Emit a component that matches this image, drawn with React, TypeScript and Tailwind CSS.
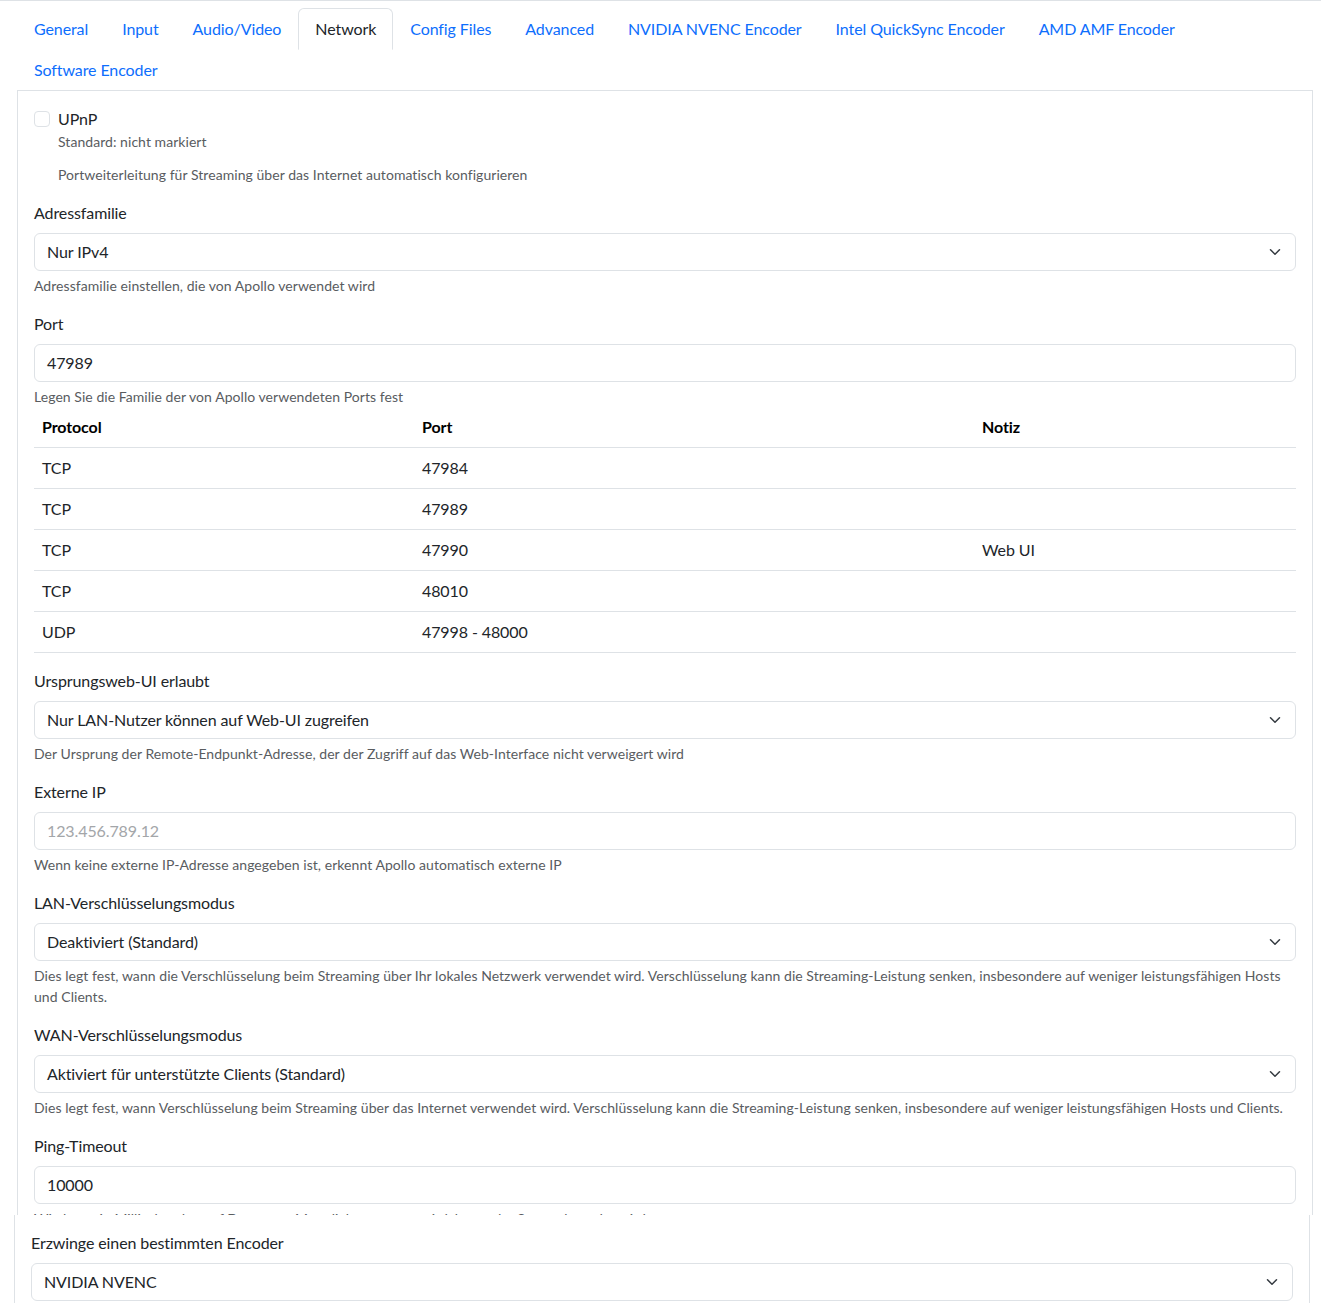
import React from "react";

const tabs = [
  "General",
  "Input",
  "Audio/Video",
  "Network",
  "Config Files",
  "Advanced",
  "NVIDIA NVENC Encoder",
  "Intel QuickSync Encoder",
  "AMD AMF Encoder",
  "Software Encoder",
];

const ports = [
  { proto: "TCP", port: "47984", note: "" },
  { proto: "TCP", port: "47989", note: "" },
  { proto: "TCP", port: "47990", note: "Web UI" },
  { proto: "TCP", port: "48010", note: "" },
  { proto: "UDP", port: "47998 - 48000", note: "" },
];

const Chevron = () => (
  <svg
    viewBox="0 0 16 16"
    className="w-4 h-3 absolute right-3 top-1/2 -translate-y-1/2"
    fill="none"
    stroke="#343a40"
    strokeWidth={2}
    strokeLinecap="round"
    strokeLinejoin="round"
  >
    <path d="m2 5 6 6 6-6" />
  </svg>
);

const Label = ({ children }: { children: React.ReactNode }) => (
  <div className="mb-2 text-base leading-6 text-[#212529]">{children}</div>
);

const Help = ({ children }: { children: React.ReactNode }) => (
  <div className="mt-1 text-sm leading-[21px] tracking-[0.05px] text-[#595c5f]">{children}</div>
);

const Select = ({ value }: { value: string }) => (
  <div className="relative h-[38px] border border-[#dee2e6] rounded-md px-3 flex items-center text-base text-[#212529]">
    {value}
    <Chevron />
  </div>
);

const Input = ({ value, placeholder }: { value?: string; placeholder?: string }) => (
  <div className="h-[38px] border border-[#dee2e6] rounded-md px-3 flex items-center text-base">
    {value ? (
      <span className="text-[#212529]">{value}</span>
    ) : (
      <span className="text-[#a3a6a9]">{placeholder}</span>
    )}
  </div>
);

const App = () => {
  return (
    <div className="w-[1321px] bg-white border-t border-[#dee2e6] font-['Segoe_UI',Lato,'Noto_Sans',sans-serif] tracking-[-0.1px] text-[#212529]">
      <div className="h-[1214px] overflow-hidden">
        {/* tab strip */}
        <ul className="flex flex-wrap ml-[17px] w-[1296px] pt-[7px]">
          {tabs.map((t) => (
            <li
              key={t}
              className={
                t === "Network"
                  ? "px-4 py-2 leading-6 border border-[#dee2e6] border-b-white rounded-t-md -mb-px text-[#212529] bg-white"
                  : "px-4 py-2 leading-6 border border-transparent -mb-px text-[#0d6efd]"
              }
            >
              {t}
            </li>
          ))}
        </ul>

        <div className="ml-[17px] w-[1296px] border-x border-t border-[#dee2e6] p-4">
          {/* UPnP */}
          <div className="mb-4">
            <div className="flex items-center gap-2 leading-6">
              <span className="w-4 h-4 border border-[#dee2e6] rounded" />
              <span>UPnP</span>
            </div>
            <div className="pl-6 text-sm leading-[21px] tracking-[0.05px] text-[#595c5f]">Standard: nicht markiert</div>
            <div className="pl-6 mt-3 text-sm leading-[21px] tracking-[0.05px] text-[#595c5f]">
              Portweiterleitung für Streaming über das Internet automatisch konfigurieren
            </div>
          </div>

          <div className="mb-4">
            <Label>Adressfamilie</Label>
            <Select value="Nur IPv4" />
            <Help>Adressfamilie einstellen, die von Apollo verwendet wird</Help>
          </div>

          <div className="mb-4">
            <Label>Port</Label>
            <Input value="47989" />
            <Help>Legen Sie die Familie der von Apollo verwendeten Ports fest</Help>
            <table className="w-full table-fixed border-collapse text-base">
              <thead>
                <tr className="border-b border-[#dee2e6]">
                  <th className="w-[380px] p-2 leading-6 text-left font-bold text-black">Protocol</th>
                  <th className="w-[560px] p-2 leading-6 text-left font-bold text-black">Port</th>
                  <th className="p-2 leading-6 text-left font-bold text-black">Notiz</th>
                </tr>
              </thead>
              <tbody>
                {ports.map((r) => (
                  <tr key={r.port} className="border-b border-[#dee2e6]">
                    <td className="p-2 leading-6">{r.proto}</td>
                    <td className="p-2 leading-6">{r.port}</td>
                    <td className="p-2 leading-6">{r.note}</td>
                  </tr>
                ))}
              </tbody>
            </table>
          </div>

          <div className="mb-4">
            <Label>Ursprungsweb-UI erlaubt</Label>
            <Select value="Nur LAN-Nutzer können auf Web-UI zugreifen" />
            <Help>Der Ursprung der Remote-Endpunkt-Adresse, der der Zugriff auf das Web-Interface nicht verweigert wird</Help>
          </div>

          <div className="mb-4">
            <Label>Externe IP</Label>
            <Input placeholder="123.456.789.12" />
            <Help>Wenn keine externe IP-Adresse angegeben ist, erkennt Apollo automatisch externe IP</Help>
          </div>

          <div className="mb-4">
            <Label>LAN-Verschlüsselungsmodus</Label>
            <Select value="Deaktiviert (Standard)" />
            <Help>
              Dies legt fest, wann die Verschlüsselung beim Streaming über Ihr lokales Netzwerk verwendet wird.
              Verschlüsselung kann die Streaming-Leistung senken, insbesondere auf weniger leistungsfähigen Hosts
              und Clients.
            </Help>
          </div>

          <div className="mb-4">
            <Label>WAN-Verschlüsselungsmodus</Label>
            <Select value="Aktiviert für unterstützte Clients (Standard)" />
            <Help>
              Dies legt fest, wann Verschlüsselung beim Streaming über das Internet verwendet wird. Verschlüsselung
              kann die Streaming-Leistung senken, insbesondere auf weniger leistungsfähigen Hosts und Clients.
            </Help>
          </div>

          <div className="mb-4">
            <Label>Ping-Timeout</Label>
            <Input value="10000" />
            <Help>Wie lange in Millisekunden auf Daten von Moonlight gewartet wird, bevor der Stream beendet wird</Help>
          </div>
        </div>
      </div>

      {/* encoder panel */}
      <div className="ml-[14px] w-[1296px] border-x border-[#dee2e6] px-4 pt-4 pb-4">
        <Label>Erzwinge einen bestimmten Encoder</Label>
        <Select value="NVIDIA NVENC" />
      </div>
    </div>
  );
};

export default App;
